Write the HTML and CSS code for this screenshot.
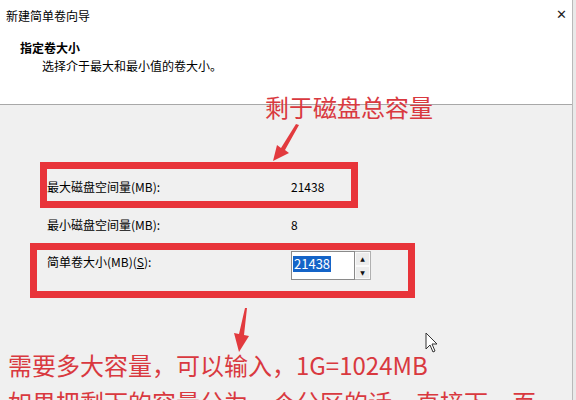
FILE: index.html
```html
<!DOCTYPE html>
<html lang="zh-CN">
<head>
    <meta charset="UTF-8">
    <title>新建简单卷向导</title>
    <link rel="stylesheet" href="styles.css">
</head>
<body>
    <div class="window">
        <!-- 标题栏 -->
        <div class="titlebar">
            <span class="title">新建简单卷向导</span>
            <span class="close">&#10005;</span>
        </div>

        <!-- 页眉 -->
        <div class="header">
            <div class="header-title">指定卷大小</div>
            <div class="header-sub">选择介于最大和最小值的卷大小。</div>
        </div>

        <!-- 内容 -->
        <div class="content">
            <div class="row">
                <span class="label">最大磁盘空间量(MB):</span>
                <span class="value">21438</span>
            </div>
            <div class="row">
                <span class="label">最小磁盘空间量(MB):</span>
                <span class="value">8</span>
            </div>
            <div class="row row-input">
                <span class="label">简单卷大小(MB)(<u>S</u>):</span>
                <div class="spin">
                    <div class="spin-field"><span class="selected">21438</span></div>
                    <div class="spin-buttons">
                        <span class="spin-btn">&#9650;</span>
                        <span class="spin-btn">&#9660;</span>
                    </div>
                </div>
            </div>
        </div>
    </div>

    <!-- 标注 -->
    <div class="note note-top">剩于磁盘总容量</div>
    <svg class="arrow arrow-top" width="40" height="45" viewBox="0 0 40 45">
        <polygon points="25,1 28,2 14,27 18,30 2,38 6,22 10,25" fill="#e23a3e"/>
    </svg>
    <div class="mark mark-max"></div>
    <div class="mark mark-size"></div>
    <svg class="arrow arrow-bottom" width="30" height="50" viewBox="0 0 30 50">
        <polygon points="16,1 18,1 15,28 20,29 10,45 5,26 10,27" fill="#e23a3e"/>
    </svg>
    <svg class="cursor" width="14" height="22" viewBox="0 0 14 22">
        <polygon points="1,1 1,17 5,13 8,20 10,19 7,12 12,12" fill="#fff" stroke="#333" stroke-width="1"/>
    </svg>
    <div class="note note-bottom">
        需要多大容量，可以输入，1G=1024MB<br>
        如果把剩下的容量分为一个分区的话，直接下一页
    </div>
</body>
</html>
```

FILE: styles.css
```css
body {
    margin: 0;
    background-color: #e9e9e9;
    font-family: "Microsoft YaHei", "Noto Sans CJK SC", sans-serif;
    color: #000;
    overflow: hidden;
}

/* 窗口 */
.window {
    width: 572px;
    height: 400px;
    background-color: #f0f0f0;
    border-right: 1px solid #b9b9b9;
}
.titlebar {
    display: flex;
    justify-content: space-between;
    align-items: center;
    height: 30px;
    padding: 0 5px 0 6px;
    background-color: #fff;
    font-size: 12px;
}
.close {
    font-size: 13px;
    font-family: "DejaVu Sans", sans-serif;
    color: #222;
    margin-top: -2px;
}

/* 页眉 */
.header {
    height: 75px;
    padding: 9px 0 0 20px;
    box-sizing: border-box;
    background-color: #fff;
    border-bottom: 1px solid #a8a8a8;
    font-size: 12px;
    line-height: 18px;
}
.header-title {
    font-weight: bold;
}
.header-sub {
    padding-left: 22px;
}

/* 内容 */
.content {
    padding: 71px 0 0 47px;
    font-size: 12px;
}
.row {
    display: flex;
    align-items: center;
    height: 20px;
    margin-bottom: 18px;
}
.label {
    width: 244px;
}
.row-input {
    align-items: flex-start;
    margin-top: -1px;
}
.row-input .label {
    line-height: 22px;
}
.spin {
    display: flex;
    height: 29px;
}
.spin-field {
    width: 64px;
    border: 1px solid #8a8a8a;
    background-color: #fff;
    padding: 3px 0 0 1px;
    box-sizing: border-box;
}
.selected {
    display: inline-block;
    background-color: #1464c8;
    color: #fff;
    font-size: 13px;
    line-height: 16px;
    padding: 0 1px;
}
.spin-buttons {
    display: flex;
    flex-direction: column;
    width: 16px;
    border: 1px solid #b0b0b0;
    border-left: none;
    box-sizing: border-box;
}
.spin-btn {
    flex: 1;
    display: flex;
    justify-content: center;
    align-items: center;
    font-size: 6px;
    font-family: "DejaVu Sans", sans-serif;
    color: #111;
    background-color: #ececec;
    border: 1px solid #fafafa;
}

/* 标注 */
.note {
    position: absolute;
    color: #d9393f;
    font-family: "Microsoft YaHei", "Noto Sans CJK SC", sans-serif;
    font-size: 24px;
}
.note-top {
    left: 265px;
    top: 93px;
    line-height: 28px;
}
.note-bottom {
    left: 8px;
    top: 346px;
    line-height: 37px;
    white-space: nowrap;
}
.mark {
    position: absolute;
    border: 7px solid #e8343a;
    box-sizing: border-box;
}
.mark-max {
    left: 40px;
    top: 162px;
    width: 318px;
    height: 46px;
}
.mark-size {
    left: 30px;
    top: 243px;
    width: 385px;
    height: 55px;
}
.arrow {
    position: absolute;
}
.arrow-top {
    left: 271px;
    top: 123px;
}
.arrow-bottom {
    left: 229px;
    top: 307px;
}
.cursor {
    position: absolute;
    left: 425px;
    top: 332px;
}
```
